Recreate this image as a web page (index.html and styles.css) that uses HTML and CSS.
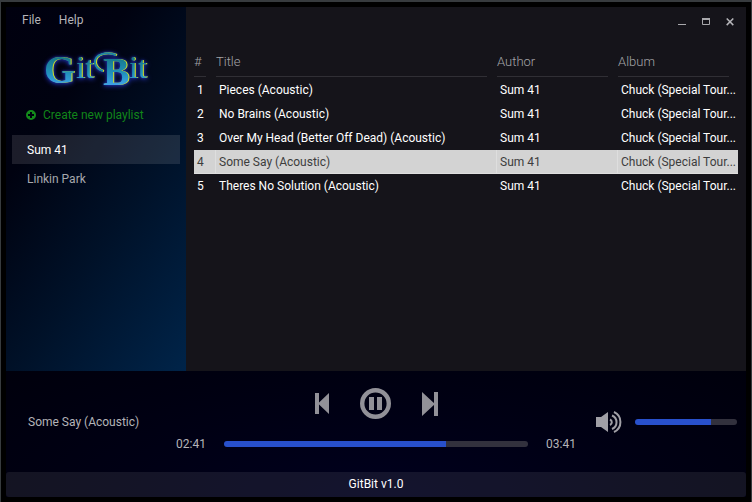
FILE: index.html
```html
<!DOCTYPE html>
<html lang="en">
<head>
<meta charset="utf-8">
<meta name="viewport" content="width=device-width, initial-scale=1">
<title>GitBit</title>
<link rel="stylesheet" href="styles.css">
</head>
<body>
<div class="window">
  <div class="upper">
    <aside class="sidebar">
      <nav class="menu" aria-label="Application">
        <button type="button">File</button>
        <button type="button">Help</button>
      </nav>
      <svg class="logo" viewBox="0 0 108 40" role="img" aria-label="GitBit">
        <defs>
          <linearGradient id="ink" gradientUnits="userSpaceOnUse" x1="0" y1="4" x2="0" y2="38">
            <stop offset="0" stop-color="#14707c"/>
            <stop offset="0.6" stop-color="#2191bd"/>
            <stop offset="1" stop-color="#45a5f0"/>
          </linearGradient>
        </defs>
        <g class="logo-face">
          <path d="M74 6C65 2 52 5 53 14C54 19 57 21 61 22"/>
          <text><tspan class="cap" x="2" y="34">G</tspan><tspan class="low" x="34" y="29">it</tspan><tspan class="cap" x="61" y="36">B</tspan><tspan class="low" x="87" y="29">it</tspan></text>
        </g>
      </svg>
      <button type="button" class="create">
        <svg width="10" height="10" viewBox="0 0 10 10" aria-hidden="true"><path fill="#138a1b" fill-rule="evenodd" d="M5 0a5 5 0 1 1 0 10A5 5 0 0 1 5 0ZM4 2v2H2v2h2v2h2V6h2V4H6V2Z"/></svg>
        Create new playlist
      </button>
      <ul class="playlists">
        <li><a class="active" href="#sum41">Sum 41</a></li>
        <li><a href="#linkinpark">Linkin Park</a></li>
      </ul>
    </aside>
    <main class="content">
      <div class="window-buttons">
        <button type="button" aria-label="Minimize"><svg width="8" height="8" viewBox="0 0 8 8"><path d="M0 6.500h8" stroke="#a8a8ac"/></svg></button>
        <button type="button" aria-label="Maximize"><svg width="8" height="8" viewBox="0 0 8 8"><path d="M.5 1v5.500h7V1" fill="none" stroke="#a8a8ac"/><path d="M0 1h8" stroke="#a8a8ac" stroke-width="2"/></svg></button>
        <button type="button" aria-label="Close"><svg width="8" height="8" viewBox="0 0 8 8"><path d="M.7.5l6.600 6.600M7.300.5L.7 7.100" stroke="#b4b4b8" stroke-width="1.500"/></svg></button>
      </div>
      <table class="tracks">
        <colgroup><col class="c-num"><col class="c-title"><col class="c-author"><col class="c-album"></colgroup>
        <thead>
          <tr><th scope="col"><span>#</span></th><th scope="col"><span>Title</span></th><th scope="col"><span>Author</span></th><th scope="col"><span>Album</span></th></tr>
        </thead>
        <tbody>
          <tr><td>1</td><td>Pieces (Acoustic)</td><td>Sum 41</td><td>Chuck (Special Tour...</td></tr>
          <tr><td>2</td><td>No Brains (Acoustic)</td><td>Sum 41</td><td>Chuck (Special Tour...</td></tr>
          <tr><td>3</td><td>Over My Head (Better Off Dead) (Acoustic)</td><td>Sum 41</td><td>Chuck (Special Tour...</td></tr>
          <tr class="selected"><td>4</td><td>Some Say (Acoustic)</td><td>Sum 41</td><td>Chuck (Special Tour...</td></tr>
          <tr><td>5</td><td>Theres No Solution (Acoustic)</td><td>Sum 41</td><td>Chuck (Special Tour...</td></tr>
        </tbody>
      </table>
    </main>
  </div>
  <div class="bottom">
    <section class="player" aria-label="Player">
      <div class="now-playing">Some Say (Acoustic)</div>
      <div class="transport">
        <div class="controls">
          <button type="button" aria-label="Previous"><svg width="14" height="21" viewBox="0 0 14 21"><path fill="#929198" d="M0 0h4v21H0ZM14 0v21L3 10.500Z"/></svg></button>
          <button type="button" aria-label="Pause"><svg width="31" height="31" viewBox="0 0 31 31"><circle cx="15.500" cy="15.500" r="13.300" fill="none" stroke="#929198" stroke-width="4.400"/><path fill="#929198" d="M9 9h5v13H9ZM17 9h5v13h-5Z"/></svg></button>
          <button type="button" aria-label="Next"><svg width="16" height="24" viewBox="0 0 16 24"><path fill="#929198" d="M0 0L13 12L0 24ZM12 0h4v24h-4Z"/></svg></button>
        </div>
        <div class="seek">
          <span class="time">02:41</span>
          <input type="range" aria-label="Position" min="0" max="100" value="73" style="--value:73%">
          <span class="time end">03:41</span>
        </div>
      </div>
      <div class="volume">
        <svg width="26" height="22" viewBox="0 0 26 22" aria-hidden="true"><path fill="#a09fa6" d="M0 6h5l7-5v20l-7-5H0Z"/><g fill="none" stroke="#a09fa6" stroke-width="2"><path d="M14 8.500a3 3 0 0 1 0 5.500"/><path d="M16 4.500a7.300 7.300 0 0 1 0 13.500"/><path d="M18 1a11 11 0 0 1 0 20"/></g></svg>
        <input type="range" aria-label="Volume" min="0" max="100" value="75" style="--value:75%">
      </div>
    </section>
    <footer class="status">GitBit v1.0</footer>
  </div>
</div>
</body>
</html>
```
FILE: styles.css
```css
* { box-sizing: border-box; }

body {
  margin: 0;
  background: #000;
  color: #b4b4b8;
  font: 12px/18px Roboto, "Open Sans", sans-serif;
}

button {
  padding: 0;
  border: 0;
  background: none;
  color: inherit;
  font: inherit;
}

svg { display: block; }

.window {
  display: flex;
  flex-direction: column;
  min-height: 100vh;
  padding: 5px;
  border: solid #373b3e;
  border-width: 2px 1px 0;
}

.upper {
  flex: 1;
  display: grid;
  grid-template-columns: 180px 1fr;
}

.sidebar {
  background: linear-gradient(125deg, #00000f 0%, #000210 28%, #001128 60%, #002449 100%);
}

.menu {
  display: flex;
  gap: 18px;
  padding: 4px 16px;
}

.logo {
  width: 108px;
  height: 40px;
  margin: 16px 0 0 36px;
  overflow: visible;
  font-family: "Liberation Serif", serif;
}

.logo .cap { font-size: 40px; font-weight: 700; }
.logo .low { font-size: 32px; }

.logo-face {
  filter: drop-shadow(1px 0 0 #d8e61c) drop-shadow(0 0 1px #1c2c9c) drop-shadow(0 1px 2px #1c2c9c);
}

.logo-face text { fill: url(#ink); }
.logo-face path { fill: none; stroke: #1d85a6; stroke-width: 2px; }

.create {
  display: flex;
  align-items: center;
  gap: 7px;
  margin: 17px 0 11px 20px;
  color: #118519;
}

.playlists {
  margin: 0;
  padding: 0 6px;
  list-style: none;
}

.playlists a {
  display: block;
  padding: 6px 15px 5px;
  color: #a6a8ad;
  text-decoration: none;
}

.playlists .active {
  background: rgba(255, 255, 255, 0.11);
  color: #fff;
}

.content {
  padding: 0 8px;
  background: #15141a;
}

.window-buttons {
  display: flex;
  justify-content: flex-end;
  gap: 16px;
  padding: 11px 4px 20px;
}

.tracks {
  width: 100%;
  table-layout: fixed;
  border-collapse: collapse;
}

.c-num { width: 21px; }
.c-author, .c-album { width: 121px; }

.tracks th {
  padding: 0;
  color: #a4a4a8;
  font-size: 13px;
  font-weight: 300;
  text-align: left;
}

.tracks th span {
  display: block;
  height: 31px;
  margin: 0 9px 1px 1px;
  padding-top: 7px;
  border-bottom: 1px solid #302f35;
}

.tracks th:first-child span { margin-left: 0; }

.tracks td {
  height: 24px;
  padding: 0 0 0 4px;
  color: #fff;
  white-space: nowrap;
}

.tracks td:first-child { padding-left: 3px; }

.tracks .selected td {
  background: #d3d3d3;
  box-shadow: inset 0 -1px #dedede;
  color: #3d3d3d;
}

.tracks .selected td + td { box-shadow: inset 1px -1px #dedede; }

.bottom {
  background: radial-gradient(ellipse at 50% 100%, #00001e 0%, #000014 50%, #00000c 100%);
}

.player {
  display: grid;
  grid-template-columns: 170px 1fr 170px;
  align-items: center;
  min-height: 101px;
}

.now-playing { padding-left: 22px; }

.transport { padding-bottom: 2px; }

.controls {
  display: flex;
  align-items: center;
  justify-content: center;
  gap: 31px;
  margin-bottom: 16px;
}

.seek {
  display: flex;
  align-items: center;
}

.time { width: 48px; }
.time.end { text-align: right; }

.volume {
  display: flex;
  align-items: center;
  gap: 13px;
  padding: 0 9px 0 20px;
}

input[type="range"] {
  flex: 1;
  min-width: 0;
  height: 6px;
  margin: 0;
  border-radius: 3px;
  appearance: none;
  background: linear-gradient(to right, #2850cc var(--value), #32313d var(--value));
}

input[type="range"]::-webkit-slider-thumb {
  appearance: none;
  width: 0;
  height: 6px;
}

.status {
  padding: 3px 0 4px;
  border-radius: 3px;
  background: rgba(255, 255, 255, 0.08);
  color: #fff;
  text-align: center;
}
```
